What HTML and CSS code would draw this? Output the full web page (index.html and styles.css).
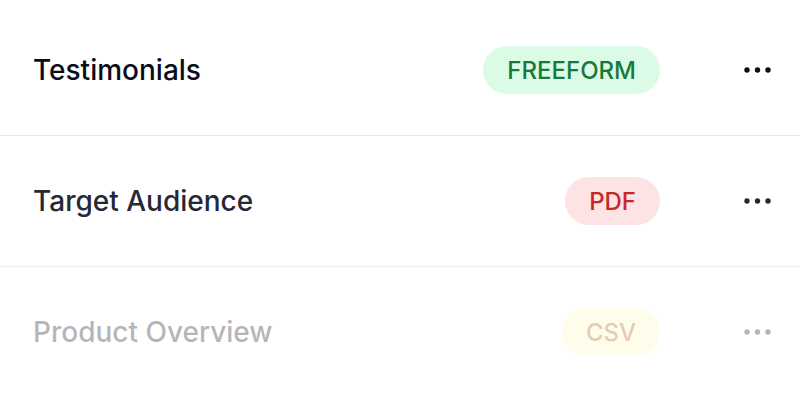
FILE: index.html
```html
<!DOCTYPE html>
<html lang="en">
<head>
  <meta charset="UTF-8">
  <title>Sections</title>
  <link rel="stylesheet" href="styles.css">
</head>
<body>
  <div class="section-list">
    <div class="section-row">
      <span class="section-name">Testimonials</span>
      <span class="badge badge-green">FREEFORM</span>
      <button class="more-btn" aria-label="More">
        <svg width="27" height="6" viewBox="0 0 27 6"><circle cx="3" cy="3" r="2.7"/><circle cx="13.5" cy="3" r="2.7"/><circle cx="24" cy="3" r="2.7"/></svg>
      </button>
    </div>
    <div class="section-row row-dim">
      <span class="section-name">Target Audience</span>
      <span class="badge badge-red">PDF</span>
      <button class="more-btn" aria-label="More">
        <svg width="27" height="6" viewBox="0 0 27 6"><circle cx="3" cy="3" r="2.7"/><circle cx="13.5" cy="3" r="2.7"/><circle cx="24" cy="3" r="2.7"/></svg>
      </button>
    </div>
    <div class="section-row row-faded">
      <span class="section-name">Product Overview</span>
      <span class="badge badge-yellow">CSV</span>
      <button class="more-btn" aria-label="More">
        <svg width="27" height="6" viewBox="0 0 27 6"><circle cx="3" cy="3" r="2.7"/><circle cx="13.5" cy="3" r="2.7"/><circle cx="24" cy="3" r="2.7"/></svg>
      </button>
    </div>
  </div>
</body>
</html>
```

FILE: styles.css
```css
body {
  margin: 0;
  background: #ffffff;
  font-family: Inter, "Noto Sans", sans-serif;
}
.section-list {
  padding-top: 5px;
}
.section-row {
  display: flex;
  align-items: center;
  height: 130px;
  padding: 0 29px 0 33px;
  border-bottom: 1px solid #e3e6ef;
}
.section-name {
  flex: 1;
  font-size: 28px;
  font-weight: 500;
  color: #0b0d1a;
}
.badge {
  display: inline-flex;
  align-items: center;
  height: 48px;
  padding: 0 24px;
  border-radius: 24px;
  font-size: 24px;
  font-weight: 500;
}
.badge-green { background: #dcfbe6; color: #177a39; }
.badge-red { background: #fde3e3; color: #c62828; }
.badge-yellow { background: #fef9c3; color: #b45309; }
.more-btn {
  margin-left: 84px;
  padding: 0;
  border: none;
  background: none;
  display: flex;
  fill: #0b0d1a;
}
.row-dim .section-name { color: #262836; }
.row-dim .more-btn { fill: #262836; }
.row-dim { border-bottom-color: #ececf4; }
.row-faded { opacity: 0.3; border-bottom: none; }
```
